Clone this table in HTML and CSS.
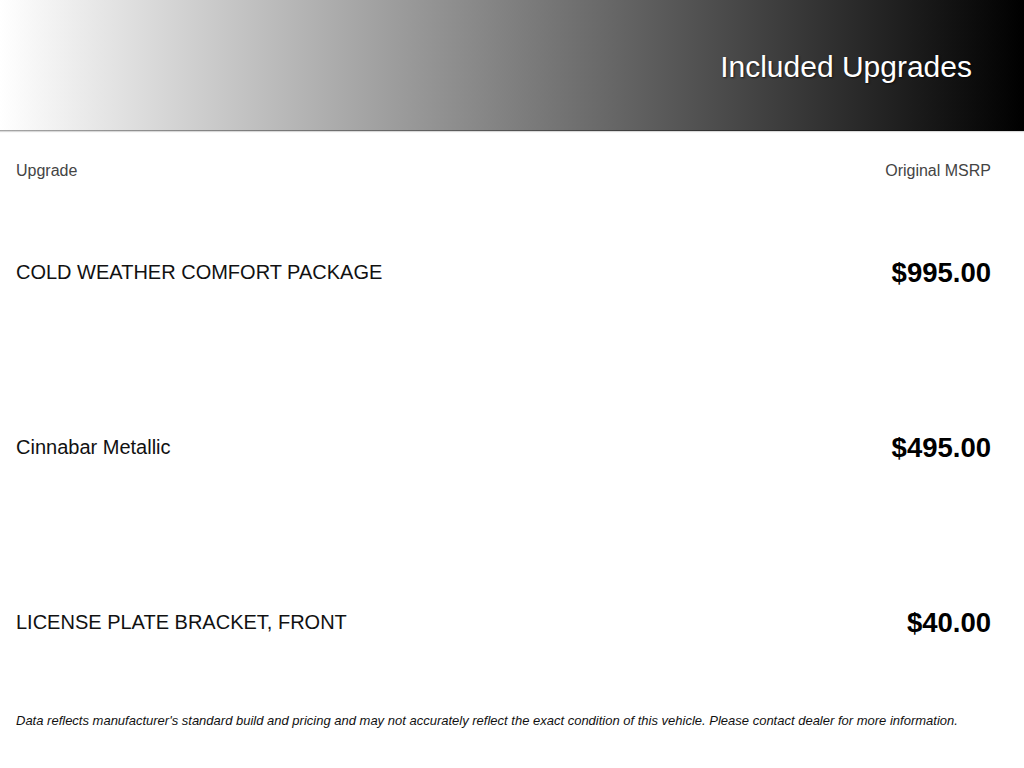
FILE: index.html
```html
<!DOCTYPE html>
<html lang="en">
<head>
<meta charset="utf-8">
<title>Included Upgrades</title>
<link rel="stylesheet" href="styles.css">
</head>
<body>
<header class="banner">
  <h1 class="banner-title">Included Upgrades</h1>
</header>
<main class="content">
  <div class="col-heads">
    <span>Upgrade</span>
    <span>Original MSRP</span>
  </div>
  <ul class="upgrades">
    <li class="upgrade"><span class="name">COLD WEATHER COMFORT PACKAGE</span><span class="price">$995.00</span></li>
    <li class="upgrade"><span class="name">Cinnabar Metallic</span><span class="price">$495.00</span></li>
    <li class="upgrade"><span class="name">LICENSE PLATE BRACKET, FRONT</span><span class="price">$40.00</span></li>
  </ul>
  <p class="disclaimer">Data reflects manufacturer's standard build and pricing and may not accurately reflect the exact condition of this vehicle. Please contact dealer for more information.</p>
</main>
</body>
</html>
```

FILE: styles.css
```css
html, body {
  margin: 0;
  padding: 0;
  background: #fff;
  font-family: "Liberation Sans", Arial, sans-serif;
  color: #000;
}

.banner {
  height: 130px;
  background: linear-gradient(to right, #ffffff 0%, #000000 100%);
  border-bottom: 1px solid rgba(0, 0, 0, 0.35);
  box-shadow: 0 1px 1px rgba(0, 0, 0, 0.15);
  display: flex;
  justify-content: flex-end;
  align-items: flex-start;
  padding-right: 52px;
}

.banner-title {
  margin: 49px 0 0 0;
  font-size: 30px;
  font-weight: normal;
  line-height: 36px;
  color: #fff;
  text-shadow: 1px 1px 2px rgba(0, 0, 0, 0.6);
}

.content {
  padding: 0 33px 0 16px;
}

.col-heads {
  display: flex;
  justify-content: space-between;
  margin-top: 30px;
  font-size: 16px;
  line-height: 20px;
  color: #444;
}

.upgrades {
  list-style: none;
  margin: 4px 0 0 0;
  padding: 0;
}

.upgrade {
  height: 175px;
  display: flex;
  justify-content: space-between;
  align-items: center;
}

.name {
  font-size: 20px;
  color: #111;
}

.price {
  font-size: 27.5px;
  font-weight: bold;
  color: #000;
}

.disclaimer {
  margin: 3px 0 0 0;
  font-size: 13px;
  line-height: 16px;
  font-style: italic;
  color: #111;
}
```
